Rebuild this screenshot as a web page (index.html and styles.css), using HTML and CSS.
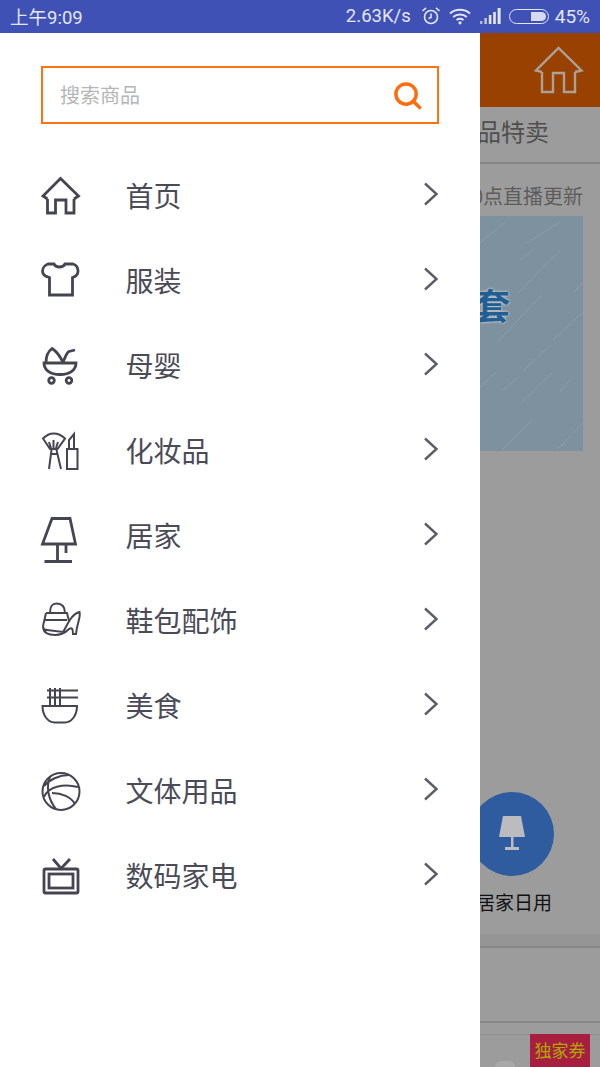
FILE: index.html
```html
<!DOCTYPE html>
<html lang="zh-CN">
<head>
  <meta charset="UTF-8">
  <title>搜索商品</title>
  <link rel="stylesheet" href="styles.css">
</head>
<body>
  <div class="status-bar">
    <span class="status-time">上午9:09</span>
    <div class="status-right">
      <span class="status-speed">2.63K/s</span>
      <svg class="icon-alarm" width="20" height="20" viewBox="0 0 20 20" fill="none" stroke="#e3e6f5" stroke-width="1.6">
        <circle cx="10" cy="11" r="6.5"/>
        <path d="M10 7.5V11.5L7.5 12.5M1.5 5L5 1.8M18.5 5L15 1.8"/>
      </svg>
      <svg class="icon-wifi" width="22" height="18" viewBox="0 0 22 18" fill="none" stroke="#e3e6f5" stroke-width="2">
        <path d="M1 6.5C6.5 1.5 15.5 1.5 21 6.5M4.2 10C8 6.8 14 6.8 17.8 10M7.5 13C9.5 11.6 12.5 11.6 14.5 13"/>
        <circle cx="11" cy="15.8" r="1.6" fill="#e3e6f5" stroke="none"/>
      </svg>
      <svg class="icon-signal" width="21" height="16" viewBox="0 0 21 16" fill="#e3e6f5">
        <rect x="0" y="13" width="2.4" height="3" opacity=".7"/>
        <rect x="4.4" y="10" width="2.4" height="6" opacity=".8"/>
        <rect x="8.8" y="7" width="2.6" height="9"/>
        <rect x="13.2" y="4" width="2.6" height="12"/>
        <rect x="17.6" y="0" width="3" height="16"/>
      </svg>
      <div class="battery"><div class="battery-fill"></div></div>
      <span class="status-pct">45%</span>
    </div>
  </div>

  <div class="screen">
    <aside class="drawer">
      <div class="search">
        <span class="search-hint">搜索商品</span>
        <svg width="29" height="29" viewBox="0 0 30 30" fill="none" stroke="#ff6d10" stroke-width="3.600">
          <circle cx="13.5" cy="13.5" r="10.5"/>
          <path d="M21 21L27.5 27.5" stroke-linecap="round"/>
        </svg>
      </div>

      <ul class="menu">
        <li class="menu-row">
          <svg class="menu-icon" viewBox="0 0 40 40"><path d="M6.500 22V36H14.500V23H25V36H33V22M6.500 22L2 19L19.500 1.500L37.500 19L33 22"/></svg>
          <span class="menu-label">首页</span>
          <svg class="menu-arrow" viewBox="0 0 16 24"><path d="M2 1.500L13.500 12L2 22.500"/></svg>
        </li>
        <li class="menu-row">
          <svg class="menu-icon" viewBox="0 0 40 40"><path d="M13 2C15 6 22 6 24 2L32 2C35 3 37 6 37 9C37 12 35 14.500 31.500 15.500V33H8.500V15.500C4 14.500 1.500 12 1.500 9C1.500 6 4 3 7 2Z"/></svg>
          <span class="menu-label">服装</span>
          <svg class="menu-arrow" viewBox="0 0 16 24"><path d="M2 1.500L13.500 12L2 22.500"/></svg>
        </li>
        <li class="menu-row">
          <svg class="menu-icon" viewBox="0 0 40 40"><path d="M3 16H35C35 23 29 27.500 19 27.500C9 27.500 3 23 3 16ZM5 15.500C5 9 7 4.500 11 1.500C15 4 19 9 22 15.500M21.500 15.500C24 12 25 6 28 4.500L34 3"/><circle cx="10.500" cy="33.500" r="2.800"/><circle cx="28" cy="33.500" r="2.800"/></svg>
          <span class="menu-label">母婴</span>
          <svg class="menu-arrow" viewBox="0 0 16 24"><path d="M2 1.500L13.500 12L2 22.500"/></svg>
        </li>
        <li class="menu-row">
          <svg class="menu-icon menu-icon-thin" viewBox="0 0 40 40"><path d="M9 17L2 6.500C6 2.500 9 1.500 12.500 1.500C16 1.500 20 2.500 24 6.500L16.500 17ZM10.500 18L8 37M15.500 18L20 37M10.500 22H16M8 10L10 16M12.500 8V16M17 10L15 16M26 37V17H36.500V37ZM28 17V8L33 2V17"/></svg>
          <span class="menu-label">化妆品</span>
          <svg class="menu-arrow" viewBox="0 0 16 24"><path d="M2 1.500L13.500 12L2 22.500"/></svg>
        </li>
        <li class="menu-row">
          <svg class="menu-icon" viewBox="0 0 40 40"><path d="M11 1.500H29L34.500 27H1.500ZM16.500 27V44M3.500 44.500H31M25 27V36"/></svg>
          <span class="menu-label">居家</span>
          <svg class="menu-arrow" viewBox="0 0 16 24"><path d="M2 1.500L13.500 12L2 22.500"/></svg>
        </li>
        <li class="menu-row">
          <svg class="menu-icon menu-icon-thin" viewBox="0 0 40 40"><path d="M9 11C9 4 11 1.500 15.500 1.500C20 1.500 24 4 24 11M5 11H26L28 19M5 11L2 24C2 26 3 28 6 28L22 30C26 24 30 12 38.500 10C40 16 36 20 35 32H32C32 27 31 25 28 27C24 31 20 33 14 33C8 33 3 31 2 26M4 18H26"/></svg>
          <span class="menu-label">鞋包配饰</span>
          <svg class="menu-arrow" viewBox="0 0 16 24"><path d="M2 1.500L13.500 12L2 22.500"/></svg>
        </li>
        <li class="menu-row">
          <svg class="menu-icon menu-icon-thin" viewBox="0 0 40 40"><path d="M1.500 19H36C36 29 30 35.500 24 35.500H13.500C7.500 35.500 1.500 29 1.500 19ZM6 3.500H37M6 10.500H37M9 1V19M14 1V19M19 1V19"/></svg>
          <span class="menu-label">美食</span>
          <svg class="menu-arrow" viewBox="0 0 16 24"><path d="M2 1.500L13.500 12L2 22.500"/></svg>
        </li>
        <li class="menu-row">
          <svg class="menu-icon menu-icon-thin" viewBox="0 0 40 40"><circle cx="20" cy="19.500" r="18.500"/><path d="M28 3C18 3 8 8 3 14M3 25C7 15 22 11 37 15M9 5C5 15 7 27 15 37M11 21C21 21 30 25 34 32"/></svg>
          <span class="menu-label">文体用品</span>
          <svg class="menu-arrow" viewBox="0 0 16 24"><path d="M2 1.500L13.500 12L2 22.500"/></svg>
        </li>
        <li class="menu-row">
          <svg class="menu-icon" viewBox="0 0 40 40"><rect x="3" y="12" width="34" height="24" rx="1.500"/><rect x="8" y="17" width="24" height="14"/><path d="M12 2L20 11.500L29 2"/></svg>
          <span class="menu-label">数码家电</span>
          <svg class="menu-arrow" viewBox="0 0 16 24"><path d="M2 1.500L13.500 12L2 22.500"/></svg>
        </li>
      </ul>
    </aside>

    <main class="behind">
      <div class="behind-head">
        <svg width="50" height="50" viewBox="0 0 50 50" fill="none" stroke="#aca198" stroke-width="2.400">
          <path d="M8 26V46H19V27H30V46H41V26M8 26L2 24.500L24.500 2L47.500 24.500L41 26"/>
        </svg>
      </div>
      <div class="behind-tabs">品特卖</div>
      <div class="behind-note">10点直播更新</div>
      <div class="behind-banner">
        <svg class="banner-rain" width="103" height="235" viewBox="0 0 103 235" stroke="#8b9eaa" stroke-width="1">
          <path d="M0 27L25 6M47 27L80 6M38 77L80 34M40 44L53 34M93 77L103 67M17 126L62 79M73 124L103 96M43 155L70 129M23 174L38 161M42 186L72 157M80 175L93 161M0 171L15 157M22 234L52 204M77 234L103 207"/>
        </svg>
        <span class="banner-word">套</span>
      </div>
      <div class="behind-cat">
        <div class="cat-circle">
          <svg width="36" height="40" viewBox="0 0 36 40" fill="#bcbcc0">
            <path d="M9 2H27L31 23H5Z"/>
            <rect x="17" y="23" width="2.500" height="11"/>
            <rect x="11" y="33" width="14" height="3"/>
          </svg>
        </div>
        <span class="cat-name">居家日用</span>
      </div>
      <div class="behind-gap"></div>
      <div class="behind-foot">
        <span class="foot-blob"></span>
        <span class="foot-tag">独家券</span>
      </div>
    </main>
  </div>
</body>
</html>
```

FILE: styles.css
```css
* {
  box-sizing: border-box;
}

html,
body {
  margin: 0;
  padding: 0;
}

body {
  width: 600px;
  height: 1067px;
  overflow: hidden;
  font-family: "Noto Sans CJK SC", "Noto Sans", sans-serif;
  background-color: #9c9c9c;
}

/* status bar */
.status-bar {
  height: 33px;
  padding: 0 10px 1px;
  display: flex;
  align-items: center;
  justify-content: space-between;
  background-color: #3f51b5;
  color: #e3e6f5;
  font-family: Roboto, "Noto Sans CJK SC", sans-serif;
  font-size: 19px;
}

.status-time {
  font-size: 18.500px;
}

.status-right {
  display: flex;
  align-items: center;
}

.status-speed {
  margin-right: 10px;
  font-size: 18.500px;
}

.icon-wifi {
  margin-left: 8px;
}

.icon-signal {
  margin-left: 9px;
}

.battery {
  width: 40px;
  height: 15px;
  margin-left: 8px;
  padding: 2px;
  display: flex;
  justify-content: flex-end;
  border: 1.500px solid #e3e6f5;
  border-radius: 8px;
}

.battery-fill {
  width: 15px;
  background-color: #d6daf0;
  border-radius: 0 5px 5px 0;
}

.status-pct {
  margin-left: 6px;
}

.screen {
  height: 1034px;
  display: flex;
}

/* drawer */
.drawer {
  width: 480px;
  flex-shrink: 0;
  padding: 33px 41px 0;
  background-color: #fff;
}

.search {
  width: 398px;
  height: 58px;
  padding: 0 15px 0 17px;
  display: flex;
  align-items: center;
  justify-content: space-between;
  border: 2px solid #ff7214;
}

.search-hint {
  margin-bottom: 2px;
  font-size: 20px;
  color: #b6b6b6;
}

.menu {
  list-style: none;
  margin: 30px 0 0;
  padding: 0;
}

.menu-row {
  height: 85px;
  display: flex;
  align-items: center;
}

.menu-icon {
  width: 40px;
  height: 40px;
  flex-shrink: 0;
  overflow: visible;
  fill: none;
  stroke: #454552;
  stroke-width: 2.800;
  filter: blur(0.3px);
}

.menu-icon-thin {
  stroke-width: 2;
}

.menu-label {
  margin: 0 0 4px 44.500px;
  flex: 1;
  font-size: 28px;
  color: #4b4b58;
}

.menu-arrow {
  width: 16px;
  height: 24px;
  margin-top: -6px;
  fill: none;
  stroke: #5d5d68;
  stroke-width: 2.400;
}

/* dimmed page behind the drawer */
.behind {
  width: 120px;
  overflow: hidden;
  display: flex;
  flex-direction: column;
  background-color: #9c9c9c;
}

.behind-head {
  height: 74px;
  padding: 13px 16px 0 0;
  display: flex;
  justify-content: flex-end;
  background-color: #994100;
}

.behind-tabs {
  height: 57px;
  margin-left: -3px;
  white-space: nowrap;
  font-size: 24px;
  line-height: 48px;
  color: #4f4f4f;
  border-bottom: 2px solid #868686;
}

.behind-note {
  height: 52px;
  padding-right: 17px;
  display: flex;
  justify-content: flex-end;
  white-space: nowrap;
  font-size: 20px;
  line-height: 64px;
  color: #5c5c5c;
}

.behind-banner {
  position: relative;
  width: 103px;
  height: 236px;
  padding-top: 65px;
  background-color: #7d919e;
}

.banner-rain {
  position: absolute;
  top: 0;
  left: 0;
}

.banner-word {
  position: relative;
  display: block;
  margin-left: -6px;
  font-size: 36px;
  font-weight: 700;
  line-height: 46px;
  color: #1f5f96;
  text-shadow: 0 0 3px #c4c4c4, 0 0 3px #c4c4c4;
}

.behind-cat {
  height: 497px;
  margin-left: -10px;
  padding-top: 341px;
  border-bottom: 2px solid #878787;
  background: linear-gradient(#9c9c9c 483px, #959595 483px);
}

.cat-circle {
  width: 84px;
  height: 84px;
  display: flex;
  align-items: center;
  justify-content: center;
  border-radius: 50%;
  background-color: #2e5c9f;
}

.cat-name {
  display: block;
  margin: 13px 0 0 6px;
  font-size: 19px;
  line-height: 26px;
  white-space: nowrap;
  color: #111;
}

.behind-gap {
  height: 75px;
  border-bottom: 2px solid #878787;
}

.behind-foot {
  flex: 1;
  margin-top: 11px;
  display: flex;
  justify-content: space-between;
  border-top: 1px solid #8f8f8f;
}

.foot-blob {
  width: 20px;
  height: 6px;
  margin: 26px 0 0 15px;
  border-radius: 10px 10px 0 0;
  background-color: #a8a8a8;
}

.foot-tag {
  width: 60px;
  margin: -1px 10px 0 0;
  text-align: center;
  font-size: 17px;
  line-height: 32px;
  color: #b0a800;
  background-color: #a81e40;
}
```
